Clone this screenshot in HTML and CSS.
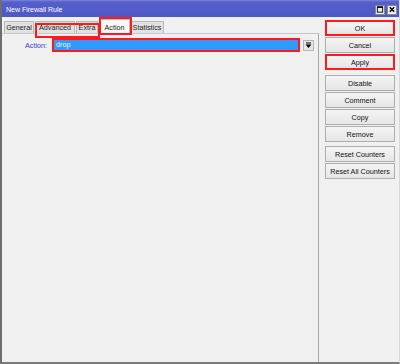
FILE: index.html
```html
<!DOCTYPE html>
<html>
<head>
<meta charset="utf-8">
<link rel="stylesheet" href="styles.css">
</head>
<body>
<div class="window">
  <div class="titlebar">
    <span class="title">New Firewall Rule</span>
    <div class="controls">
      <span class="ctl"><svg width="9" height="9" viewBox="0 0 9 9"><rect x="1.5" y="1.5" width="6" height="6" fill="none" stroke="#000" stroke-width="1"/><line x1="1.5" y1="2" x2="7.5" y2="2" stroke="#000" stroke-width="1.5"/></svg></span>
      <span class="ctl"><svg width="9" height="9" viewBox="0 0 9 9"><path d="M2 2 L7 7 M7 2 L2 7" stroke="#000" stroke-width="1.6"/></svg></span>
    </div>
  </div>
  <div class="body">
    <div class="main">
      <div class="tabs">
        <span class="tab t-general">General</span>
        <span class="tab t-adv">Advanced</span>
        <span class="tab t-extra">Extra</span>
        <span class="tab t-action active">Action</span>
        <span class="tab t-stats">Statistics</span>
      </div>
      <div class="page">
        <div class="field">
          <label class="label">Action:</label>
          <div class="input">drop</div>
          <span class="drop"><svg width="7" height="7" viewBox="0 0 7 7"><rect x="1" y="0.5" width="5" height="1" fill="#000"/><path d="M0.5 2.5 H6.5 L3.5 6 Z" fill="#000"/></svg></span>
        </div>
      </div>
    </div>
    <div class="side">
      <div class="group">
        <button class="btn hl">OK</button>
        <button class="btn">Cancel</button>
        <button class="btn hl">Apply</button>
      </div>
      <div class="group">
        <button class="btn">Disable</button>
        <button class="btn">Comment</button>
        <button class="btn">Copy</button>
        <button class="btn">Remove</button>
      </div>
      <div class="group">
        <button class="btn">Reset Counters</button>
        <button class="btn">Reset All Counters</button>
      </div>
    </div>
  </div>
  <div class="mark mark-adv"></div>
  <div class="mark mark-action"></div>
</div>
</body>
</html>
```
FILE: styles.css
```css
* { box-sizing: border-box; }
html, body { margin: 0; padding: 0; background: #f0f0f0; }
body { font-family: "Liberation Sans", Arial, sans-serif; font-size: 7.2px; color: #000; }

.window {
  position: relative;
  width: 400px;
  height: 364px;
  display: flex;
  flex-direction: column;
  background: #f0f0f0;
  border-left: 2px solid #6e6e6e;
  border-bottom: 2px solid #7a7a7a;
  border-right: 1px solid #d8d8d8;
}

.titlebar {
  height: 17px;
  display: flex;
  align-items: center;
  justify-content: space-between;
  background: linear-gradient(#7c84dc 0px, #5560cc 2px, #4d57c6 100%);
  padding: 0 2px 0 4px;
}
.title { color: #fff; font-size: 7px; padding-top: 2px; }
.controls { display: flex; gap: 2px; padding-top: 2px; }
.ctl {
  width: 10px; height: 10px;
  background: #eeeeee;
  border: 1px solid #8a8a8a;
  display: flex; align-items: center; justify-content: center;
}
.ctl svg { display: block; }

.body { flex: 1; display: flex; }

.main { width: 317px; display: flex; flex-direction: column; }
.tabs {
  height: 16px;
  display: flex;
  align-items: flex-end;
  padding-left: 2px;
}
.tab {
  height: 12px;
  display: flex; align-items: center; justify-content: center;
  background: #e2e2e2;
  border: 1px solid #b9b9b9;
  border-bottom: none;
  margin-right: 1px;
  color: #222;
}
.t-general { width: 30px; }
.t-adv { width: 40px; }
.t-extra { width: 22px; }
.t-action { width: 31px; }
.t-stats { width: 34px; }
.tab.active {
  height: 15px;
  background: #f8f8f8;
  margin-right: 0;
  position: relative;
  top: 1px;
}

.page {
  flex: 1;
  border-top: 1px solid #c8c8c8;
  border-right: 1px solid #a8a8a8;
  padding-top: 4px;
}
.field {
  display: flex;
  align-items: center;
  height: 14px;
}
.label {
  width: 50px;
  text-align: right;
  color: #3a3ad8;
  padding-right: 5px;
}
.input {
  width: 248px;
  height: 14px;
  background: #3399ff;
  color: #eef5ff;
  border: 2px solid #ff1a1a;
  padding-left: 2px;
  line-height: 10px;
}
.drop {
  width: 11px; height: 11px;
  margin-left: 3px;
  background: #e6e6e6;
  border: 1px solid #b5b5b5;
  display: flex; align-items: center; justify-content: center;
}
.drop svg { display: block; }

.side {
  flex: 1;
  display: flex;
  flex-direction: column;
  padding: 3px 0 0 6px;
  gap: 5px;
}
.group { display: flex; flex-direction: column; gap: 1px; }
.group + .group + .group { margin-top: -1px; }
.btn {
  width: 70px;
  height: 16px;
  font-family: inherit;
  font-size: 7.2px;
  color: #111;
  background: linear-gradient(#f4f4f4, #e6e6e6);
  border: 1px solid #adadad;
  padding: 0;
  margin: 0;
}
.btn.hl { border: 2px solid #ff1a1a; }

.mark {
  position: absolute;
  border: 2px solid #ff1a1a;
}
.mark-adv { left: 33px; top: 23px; width: 65px; height: 15px; }
.mark-action { left: 97px; top: 17px; width: 33px; height: 18px; }
```
